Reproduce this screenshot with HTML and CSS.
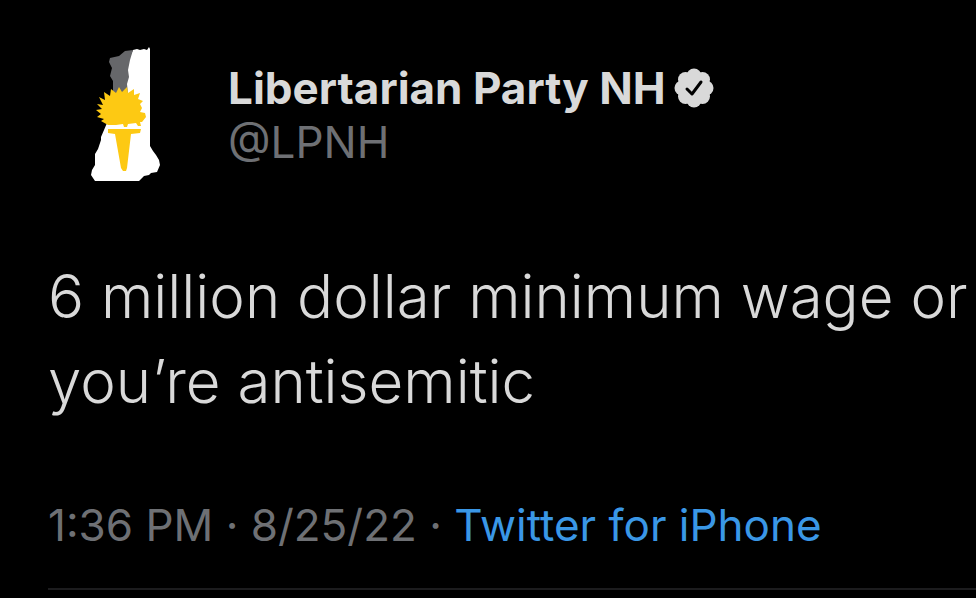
FILE: index.html
```html
<!DOCTYPE html>
<html lang="en">
<head>
    <meta charset="utf-8">
    <title>Libertarian Party NH</title>
    <link rel="stylesheet" href="styles.css">
</head>
<body>
    <article class="tweet">
        <header class="tweet-header">
            <svg class="avatar" viewBox="48 36 156 156" aria-hidden="true">
                <!-- state outline -->
                <path fill="#fff" d="M133 50l4-1 3 1 4-1 3 1 2-3 1 2v97l3 5 3 4 3 5 1 5-3 7-6 1-2 2-5 1-5 5H95l-4-6 1-5 3-5v-11l3-5 3-9v-3l6-14 6-28z"/>
                <path fill="#66676a" d="M133 50l-8 1-6 5-9 2-1 4 3 6-2 8 3 5v13h15l-1-10 2-7-1-7 2-10z"/>
                <!-- porcupine -->
                <path fill="#fdc913" d="M97 104l6 1-4-8 6 3-1-8 6 4 1-7 5 4 3-6 3 5 5-5 1 6 6-4v6l6-2-2 6 5 2-3 3 2 4-2 4 5 1 1 4-4 5h-2l1 4h-3l-2-3-8 1-1 3h-3l-1-3-7 1h-8l-7-4 3-2-7-2 4-3-5-4 6-1z"/>
                <!-- torch -->
                <path fill="#fdc913" d="M108 129h33l-1 4-9 1-4 34-1 3h-3l-2-3-6-34-7-1z"/>
            </svg>
            <div class="author">
                <div class="name-row">
                    <span class="name">Libertarian Party NH</span>
                    <svg class="badge" viewBox="0 0 40 40" role="img" aria-label="Verified account">
                        <g fill="#d9d9d9">
                            <circle cx="20" cy="20" r="14"/>
                            <circle cx="20" cy="8" r="7.5"/>
                            <circle cx="28.5" cy="11.5" r="7.5"/>
                            <circle cx="32" cy="20" r="7.5"/>
                            <circle cx="28.5" cy="28.5" r="7.5"/>
                            <circle cx="20" cy="32" r="7.5"/>
                            <circle cx="11.5" cy="28.5" r="7.5"/>
                            <circle cx="8" cy="20" r="7.5"/>
                            <circle cx="11.5" cy="11.5" r="7.5"/>
                        </g>
                        <path d="M13 21l5 5 9-12" fill="none" stroke="#000" stroke-width="3" stroke-linecap="round" stroke-linejoin="round"/>
                    </svg>
                </div>
                <div class="handle">@LPNH</div>
            </div>
        </header>
        <p class="tweet-text">6 million dollar minimum wage or you’re antisemitic</p>
        <footer class="meta">
            <time datetime="2022-08-25T13:36">1:36 PM · 8/25/22</time> · <a class="source" href="#">Twitter for iPhone</a>
        </footer>
    </article>
</body>
</html>
```
FILE: styles.css
```css
body {
    margin: 0;
    background-color: #000;
    color: #d9d9d9;
    font-family: Inter, sans-serif;
}
.tweet {
    padding: 36px 0 0 48px;
}
.tweet-header {
    display: flex;
    gap: 24px;
}
.avatar {
    width: 156px;
    height: 156px;
    flex-shrink: 0;
}
.author {
    padding-top: 25px;
    font-size: 44px;
    line-height: 54px;
}
.name-row {
    display: flex;
    align-items: center;
    gap: 8px;
}
.name {
    font-weight: 700;
}
.badge {
    width: 40px;
    height: 40px;
}
.handle {
    color: #6e7074;
}
.tweet-text {
    margin: 62px 0 71px;
    font-size: 60px;
    line-height: 85px;
    font-weight: 300;
}
.meta {
    padding-bottom: 33px;
    border-bottom: 2px solid #1c1c1e;
    color: #6e7074;
    font-size: 44px;
    line-height: 60px;
}
.source {
    color: #3a97e6;
    text-decoration: none;
}
```
